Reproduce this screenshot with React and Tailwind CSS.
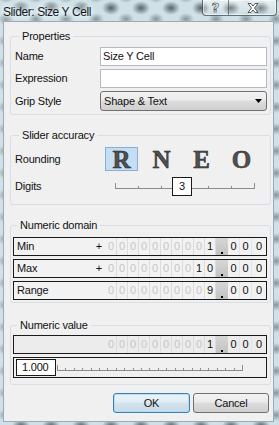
import React from 'react'

const dimmed = '#c6c6c6'

function Group({ title, className = '', children }) {
  return (
    <fieldset className={'border border-[#d5dfe5] rounded-[3px] ' + className}>
      <legend className="ml-[4px] px-[3px] h-[13px] leading-[13px]">{title}</legend>
      {children}
    </fieldset>
  )
}

function DigitRow({ label, plus, digits, bg = 'bg-[#f2f2f2]' }) {
  // leading zeros are greyed out
  const first = digits.split('').findIndex((d) => d !== '0')
  return (
    <div className={'flex h-[19px] border border-[#1a1a1a] ' + bg}>
      <div className="w-[92px] flex items-center justify-between pl-[3px] pr-[4px]">
        <span>{label}</span>
        <span>{plus ? '+' : ''}</span>
      </div>
      {digits.split('').map((d, i) => (
        <div
          key={i}
          className="w-[11px] flex items-center justify-center border-r border-[#dcdcdc]"
          style={{ color: i >= first ? '#111' : dimmed }}
        >
          {d}
        </div>
      ))}
      <div className="w-[12px] flex items-end justify-center bg-[linear-gradient(#d6d6d6,#c2c2c2)]">
        <div className="w-[2px] h-[2px] bg-black mb-[1px]" />
      </div>
      <div className="w-[12px] flex items-center justify-center border-r border-[#e4e4e4]">0</div>
      <div className="w-[12px] flex items-center justify-center border-r border-[#e4e4e4]">0</div>
      <div className="flex-1 flex items-center justify-center">0</div>
    </div>
  )
}

function Ticks({ width, count }) {
  const step = (width - 2) / (count - 1)
  return (
    <svg width={width} height="8" className="block">
      <line x1="1" y1="6.5" x2={width - 1} y2="6.5" stroke="#8c8c8c" strokeWidth="1" />
      {Array.from({ length: count }).map((_, i) => {
        const x = Math.round(1 + i * step) + 0.5
        const big = i === 0 || i === count - 1
        return <line key={i} x1={x} y1={big ? 1 : 4} x2={x} y2="7" stroke="#8c8c8c" strokeWidth="1" />
      })}
    </svg>
  )
}

const vistaBtn =
  'bg-[linear-gradient(#f2f2f2,#ebebeb_45%,#dddddd_50%,#cfcfcf)] border border-[#707070] rounded-[3px]'

const letter =
  'w-[33px] h-[24px] flex items-center justify-center text-[#505050] [-webkit-text-stroke:0.5px_#1c1c1c]'

export default function App() {
  return (
    <div className="w-[279px] h-[425px] overflow-hidden flex flex-col text-[11px] tracking-[-0.2px] text-[#111] font-['Liberation_Sans',Arial,sans-serif] bg-[#cfe1e7] bg-[radial-gradient(ellipse_9px_7px_at_50%_50%,rgba(35,45,50,0.7),rgba(35,45,50,0)),radial-gradient(ellipse_8px_6px_at_50%_50%,rgba(45,55,60,0.45),rgba(45,55,60,0))] bg-[length:30px_22px,30px_22px] bg-[position:6px_-3px,21px_8px]">
      {/* title bar */}
      <div className="h-[21px] flex items-start shrink-0">
        <span className="pl-[3px] pt-[3px] text-[12px] tracking-[-0.4px] text-[#10191f] [text-shadow:0_0_4px_#eef8fb,0_0_6px_#eef8fb,0_0_8px_#eef8fb]">
          Slider: Size Y Cell
        </span>
        <div className="ml-auto mr-[2px] flex h-[16px] rounded-b-[4px] border border-t-0 border-[rgba(30,40,50,0.65)] shadow-[inset_0_0_0_1px_rgba(255,255,255,0.6)] bg-[linear-gradient(rgba(255,255,255,0.5),rgba(255,255,255,0.2)_50%,rgba(200,215,222,0.3))]">
          <div className="w-[26px] flex items-center justify-center border-r border-[rgba(30,40,50,0.5)] text-[13px] font-bold text-white [-webkit-text-stroke:0.6px_#333] font-['DejaVu_Sans',sans-serif]">
            ?
          </div>
          <div className="w-[47px] flex items-center justify-center">
            <svg width="12" height="10" viewBox="0 0 12 10">
              <path d="M1 0.5h3l2 2.6 2-2.6h3l-3.5 4.5 3.5 4.5h-3l-2-2.6-2 2.6h-3l3.5-4.5z" fill="#fff" stroke="#333" strokeWidth="0.8" />
            </svg>
          </div>
        </div>
      </div>

      {/* client area */}
      <div className="ml-[3px] mr-[5px] h-[401px] border border-[#9aabb4] bg-[#f0f0f0] pl-[6px] pr-[2px] flex flex-col">
        <Group title="Properties" className="mt-[8px] pl-[4px] pr-[3px] pt-[4px] pb-[3px]">
          <div className="flex flex-col gap-[3px]">
            <div className="flex items-center h-[19px]">
              <span className="w-[85px]">Name</span>
              <div className="flex-1 h-full bg-white border border-[#b5b9c2] flex items-center pl-[2px]">Size Y Cell</div>
            </div>
            <div className="flex items-center h-[19px]">
              <span className="w-[85px]">Expression</span>
              <div className="flex-1 h-full bg-white border border-[#b5b9c2]" />
            </div>
            <div className="flex items-center h-[20px]">
              <span className="w-[85px]">Grip Style</span>
              <div className={'flex-1 h-full flex items-center pl-[3px] pr-[4px] ' + vistaBtn}>
                <span>Shape &amp; Text</span>
                <svg width="7" height="4" className="ml-auto">
                  <path d="M0 0h7l-3.5 4z" fill="#000" />
                </svg>
              </div>
            </div>
          </div>
        </Group>

        <Group title="Slider accuracy" className="mt-[14px] pl-[4px] pr-[3px] pt-[5px] pb-[7px]">
          <div className="flex items-center h-[24px]">
            <span className="w-[90px]">Rounding</span>
            <div className="flex gap-[7px] font-['Liberation_Serif',serif] font-bold text-[25px] leading-none tracking-normal">
              <div className={letter + ' bg-[#c5def3] border border-[#86aed6]'}>R</div>
              <div className={letter}>N</div>
              <div className={letter}>E</div>
              <div className={letter}>O</div>
            </div>
          </div>
          <div className="flex items-center h-[22px] mt-[4px]">
            <span className="w-[99px]">Digits</span>
            <div className="relative w-[141px] h-[22px] flex items-center">
              <Ticks width={141} count={7} />
              <div className="absolute left-[58px] top-[2px] w-[20px] h-[19px] bg-white border border-[#1a1a1a] flex items-center justify-center">
                3
              </div>
            </div>
          </div>
        </Group>

        <Group title="Numeric domain" className="mt-[14px] pl-[2px] pr-[3px] pt-[5px] pb-[2px]">
          <div className="flex flex-col gap-[3px]">
            <DigitRow label="Min" plus digits="0000000001" />
            <DigitRow label="Max" plus digits="0000000010" />
            <DigitRow label="Range" digits="0000000009" />
          </div>
        </Group>

        <Group title="Numeric value" className="mt-[16px] pl-[2px] pr-[3px] pt-[3px] pb-[6px]">
          <div className="flex flex-col gap-[3px]">
            <DigitRow label="" digits="0000000001" bg="bg-[#ececec]" />
            <div className="flex items-center h-[21px] border border-[#1a1a1a] bg-[#f0f0f0] pl-[2px]">
              <div className="w-[40px] h-[17px] bg-white border border-[#1a1a1a] flex items-center pl-[5px]">1.000</div>
              <Ticks width={187} count={23} />
            </div>
          </div>
        </Group>

        <div className="flex justify-end gap-[3px] mt-[8px] mr-[2px]">
          <button className="w-[77px] h-[20px] rounded-[3px] border border-[#3c7fb1] bg-[linear-gradient(#eaf3f9,#e1edf5_45%,#d3e3ee_50%,#c8dae7)] shadow-[inset_0_0_0_1px_rgba(180,220,245,0.9)] text-[11px]">
            OK
          </button>
          <button className={'w-[76px] h-[20px] text-[11px] ' + vistaBtn}>Cancel</button>
        </div>
      </div>
    </div>
  )
}
